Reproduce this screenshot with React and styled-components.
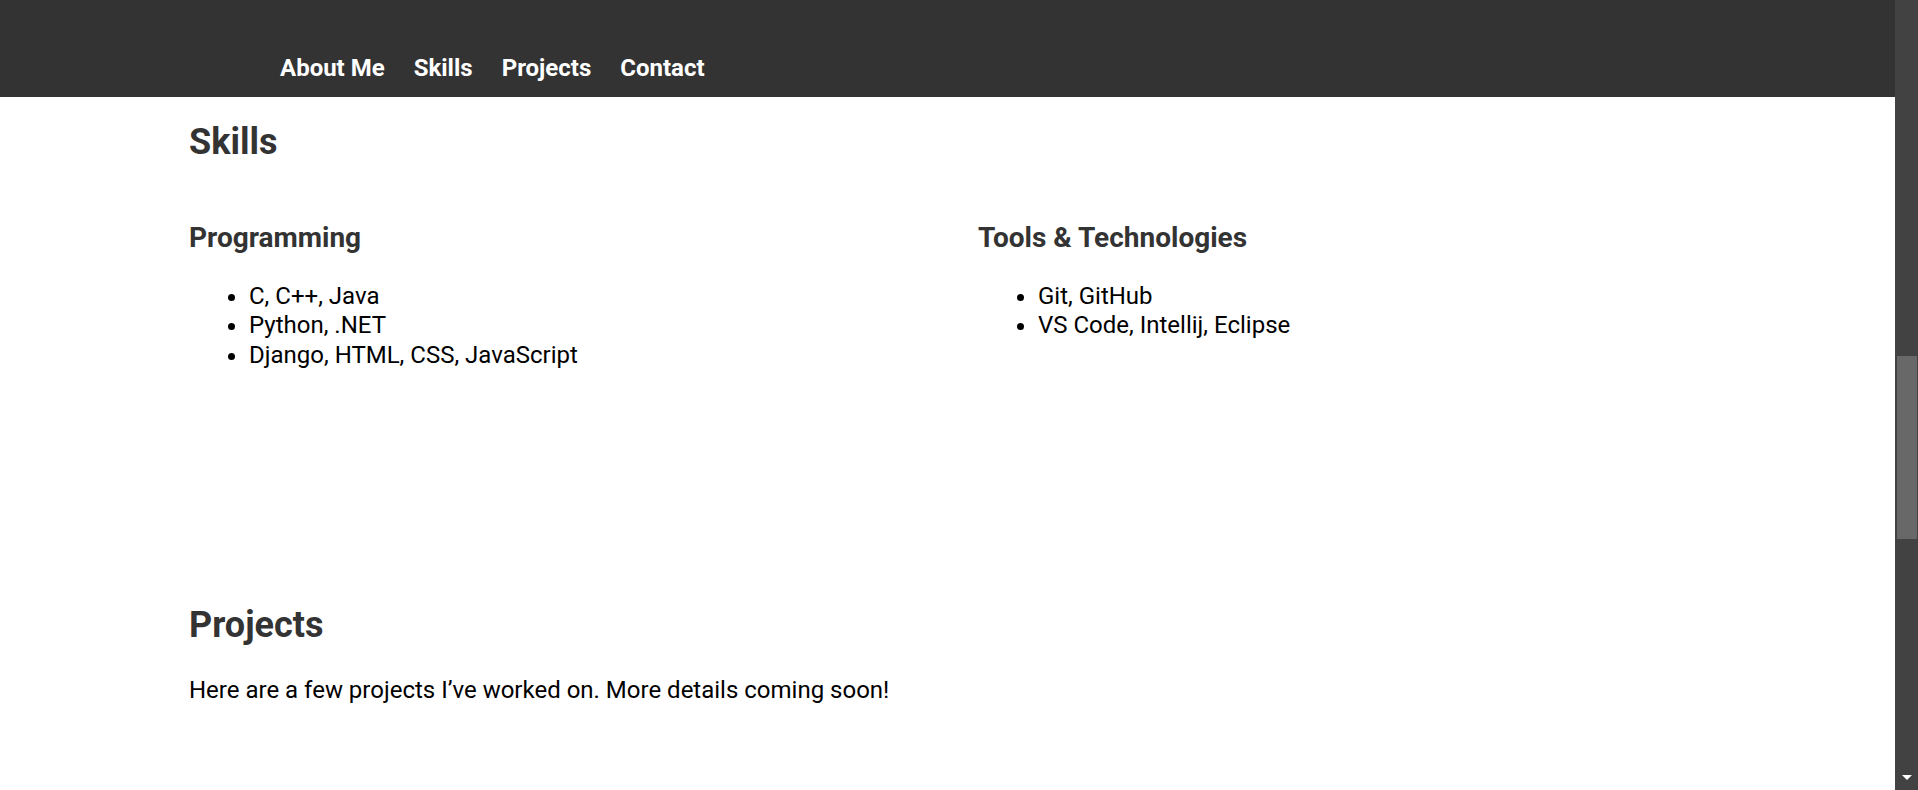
import styled, { createGlobalStyle } from 'styled-components';

const GlobalStyle = createGlobalStyle`
  html, body {
    margin: 0;
    padding: 0;
    overflow: hidden;
    background: #ffffff;
  }
  body {
    font-family: Roboto, "Open Sans", Arial, sans-serif;
    font-size: 24px;
    color: #000000;
  }
`;

const programming = ['C, C++, Java', 'Python, .NET', 'Django, HTML, CSS, JavaScript'];
const tools = ['Git, GitHub', 'VS Code, Intellij, Eclipse'];
const links = ['About Me', 'Skills', 'Projects', 'Contact'];

export default function App() {
  return (
    <>
      <GlobalStyle />
      <Page>
        <Main>
          <Header>
            <NavList>
              {links.map((l) => (
                <li key={l}><NavLink href={'#' + l.toLowerCase().replace(' ', '')}>{l}</NavLink></li>
              ))}
            </NavList>
          </Header>

          <Section id="skills">
            <SectionTitle>Skills</SectionTitle>
            <SkillsGrid>
              <div>
                <GroupTitle>Programming</GroupTitle>
                <SkillList>
                  {programming.map((s) => <li key={s}>{s}</li>)}
                </SkillList>
              </div>
              <div>
                <GroupTitle>Tools &amp; Technologies</GroupTitle>
                <SkillList>
                  {tools.map((s) => <li key={s}>{s}</li>)}
                </SkillList>
              </div>
            </SkillsGrid>
          </Section>

          <Section id="projects" top={210}>
            <SectionTitle flush>Projects</SectionTitle>
            <Text>Here are a few projects I’ve worked on. More details coming soon!</Text>
          </Section>
        </Main>

        <ScrollRail>
          <ScrollThumb />
          <ScrollArrow />
        </ScrollRail>
      </Page>
    </>
  );
}

const Page = styled.div`
  display: flex;
  height: 790px;
`;

const Main = styled.div`
  flex: 1;
  min-width: 0;
  display: flex;
  flex-direction: column;
  overflow: hidden;
`;

const Header = styled.header`
  flex: none;
  height: 97px;
  box-sizing: border-box;
  background: #333333;
  display: flex;
  align-items: flex-end;
  padding: 0 0 15px 280px;
`;

const NavList = styled.ul`
  display: flex;
  gap: 29px;
  list-style: none;
  margin: 0;
  padding: 0;
`;

const NavLink = styled.a`
  color: #ffffff;
  font-size: 24px;
  font-weight: 700;
  text-decoration: none;
`;

const Section = styled.section`
  padding: ${(p) => p.top || 0}px 188px 0 189px;
`;

const SectionTitle = styled.h2`
  margin: ${(p) => (p.flush ? 0 : 24)}px 0 30px;
  font-size: 36px;
  font-weight: 700;
  color: #333333;
`;

const SkillsGrid = styled.div`
  display: grid;
  grid-template-columns: 1fr 1fr;
  column-gap: 60px;
`;

const GroupTitle = styled.h3`
  margin: 28px 0;
  font-size: 28px;
  font-weight: 700;
  color: #333333;
`;

const SkillList = styled.ul`
  margin: 0 0 24px;
  padding-left: 60px;
  font-size: 24px;
  li {
    line-height: 29.4px;
  }
`;

const Text = styled.p`
  margin: 0;
  font-size: 24px;
`;

const ScrollRail = styled.div`
  flex: none;
  width: 23px;
  background: #424242;
  display: flex;
  flex-direction: column;
  align-items: center;
`;

const ScrollThumb = styled.div`
  align-self: flex-start;
  margin: 356px 0 0 2px;
  width: 20px;
  height: 183px;
  background: #686868;
`;

const ScrollArrow = styled.div`
  margin-top: auto;
  margin-bottom: 10px;
  width: 0;
  height: 0;
  border-left: 5px solid transparent;
  border-right: 5px solid transparent;
  border-top: 5px solid #ffffff;
`;
